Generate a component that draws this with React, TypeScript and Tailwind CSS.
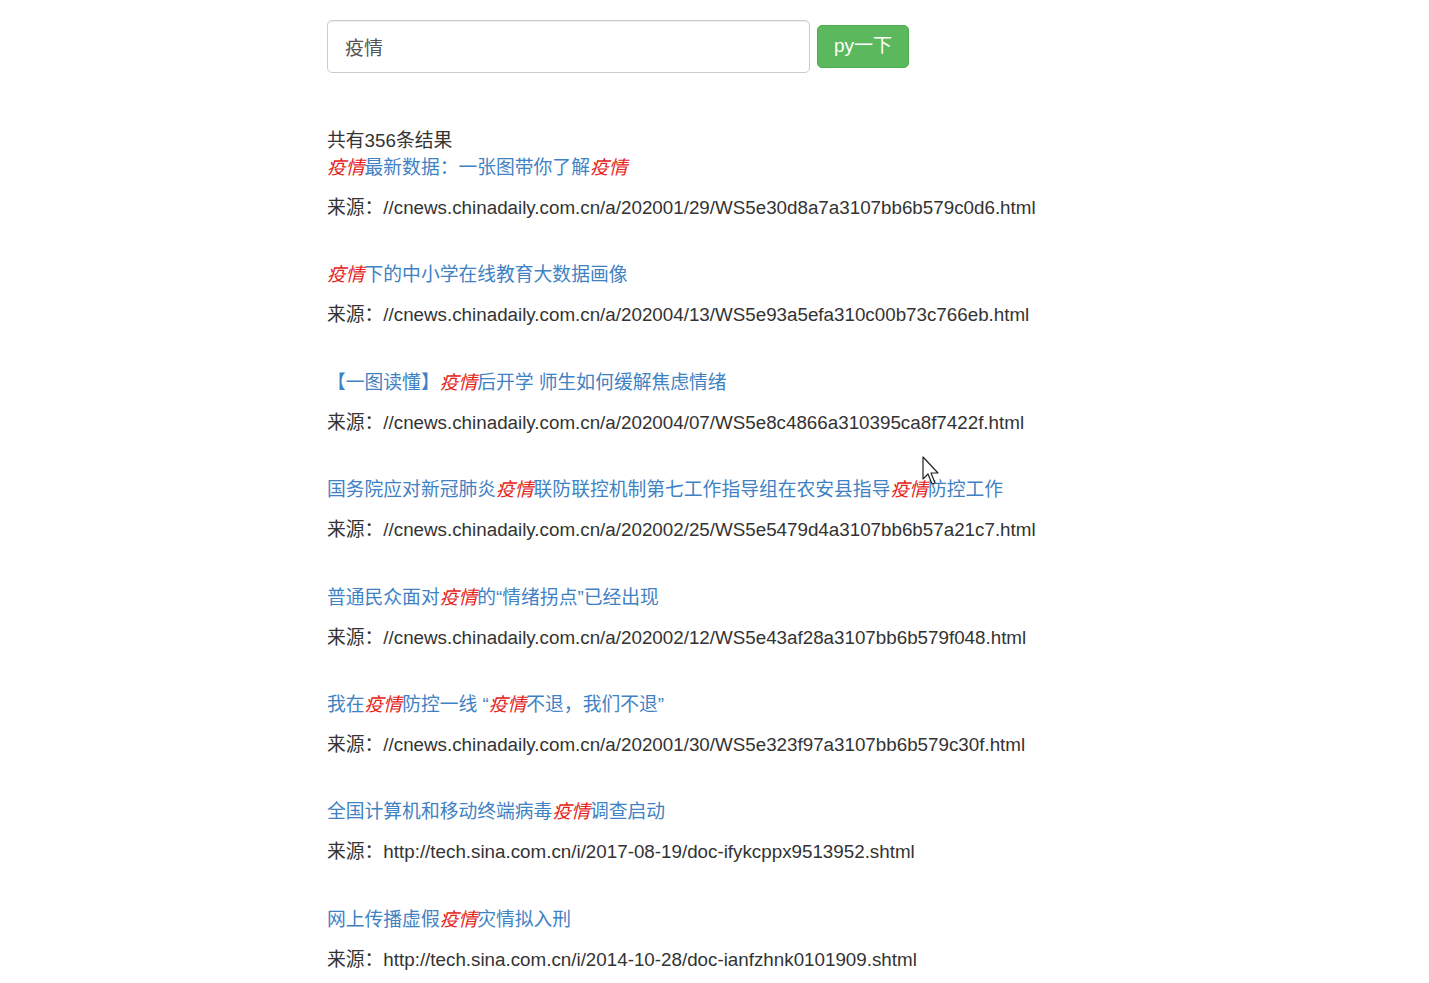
import React from "react";

const items: { title: (string | { em: string })[]; src: string }[] = [
  { title: [{ em: "疫情" }, "最新数据：一张图带你了解", { em: "疫情" }], src: "//cnews.chinadaily.com.cn/a/202001/29/WS5e30d8a7a3107bb6b579c0d6.html" },
  { title: [{ em: "疫情" }, "下的中小学在线教育大数据画像"], src: "//cnews.chinadaily.com.cn/a/202004/13/WS5e93a5efa310c00b73c766eb.html" },
  { title: ["【一图读懂】", { em: "疫情" }, "后开学 师生如何缓解焦虑情绪"], src: "//cnews.chinadaily.com.cn/a/202004/07/WS5e8c4866a310395ca8f7422f.html" },
  { title: ["国务院应对新冠肺炎", { em: "疫情" }, "联防联控机制第七工作指导组在农安县指导", { em: "疫情" }, "防控工作"], src: "//cnews.chinadaily.com.cn/a/202002/25/WS5e5479d4a3107bb6b57a21c7.html" },
  { title: ["普通民众面对", { em: "疫情" }, "的“情绪拐点”已经出现"], src: "//cnews.chinadaily.com.cn/a/202002/12/WS5e43af28a3107bb6b579f048.html" },
  { title: ["我在", { em: "疫情" }, "防控一线 “", { em: "疫情" }, "不退，我们不退”"], src: "//cnews.chinadaily.com.cn/a/202001/30/WS5e323f97a3107bb6b579c30f.html" },
  { title: ["全国计算机和移动终端病毒", { em: "疫情" }, "调查启动"], src: "http://tech.sina.com.cn/i/2017-08-19/doc-ifykcppx9513952.shtml" },
  { title: ["网上传播虚假", { em: "疫情" }, "灾情拟入刑"], src: "http://tech.sina.com.cn/i/2014-10-28/doc-ianfzhnk0101909.shtml" },
];

export default function App() {
  return (
    <div
      className="relative min-h-[983px] w-full bg-white text-[#333]"
      style={{ fontFamily: '"Liberation Sans", Arial, "Noto Sans CJK SC", sans-serif' }}
    >
      <div className="pl-[327px] pt-[20px]">
        <div className="flex items-center gap-[7px]">
          <div className="flex h-[53px] w-[483px] items-center rounded-[5px] border border-[#cccccc] bg-white pl-[17px] pt-[5px] text-[19px] text-[#555] shadow-[inset_0_1px_1px_rgba(0,0,0,0.075)]">
            疫情
          </div>
          <div className="flex h-[43px] w-[92px] items-center justify-center rounded-[5px] border border-[#4cae4c] bg-[#5cb85c] text-[19px] text-white">
            py一下
          </div>
        </div>
        <div className="mt-[54px] text-[18.8px] leading-[27px]">共有356条结果</div>
        <div className="flex flex-col gap-[40.4px]">
          {items.map((it, i) => (
            <div key={i}>
              <div className="text-[18.8px] leading-[27px] text-[#3f82c4]">
                {it.title.map((t, j) =>
                  typeof t === "string" ? (
                    <span key={j}>{t}</span>
                  ) : (
                    <em key={j} className="italic text-[#e4241b]">
                      {t.em}
                    </em>
                  )
                )}
              </div>
              <div className="mt-[13px] text-[18.8px] leading-[27px] text-[#333]">
                来源：{it.src}
              </div>
            </div>
          ))}
        </div>
      </div>
      <svg className="absolute left-[922px] top-[456px]" width="20" height="30" viewBox="0 0 20 30">
        <path d="M1 1 L1 23 L6 18 L10 28 L13 27 L9 17 L16 17 Z" fill="white" stroke="#222" strokeWidth="1.2" strokeLinejoin="round" />
      </svg>
    </div>
  );
}
